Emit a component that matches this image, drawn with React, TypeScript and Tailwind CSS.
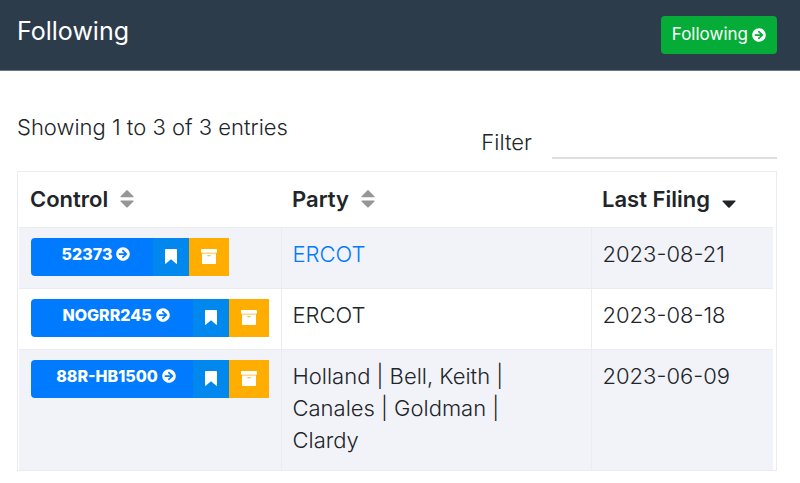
import React from 'react';
import { FaArrowCircleRight } from 'react-icons/fa';

interface Filing {
    control: string;
    party: string;
    linked?: boolean;
    date: string;
    width: string;
}

const FILINGS: Filing[] = [
    { control: '52373', party: 'ERCOT', linked: true, date: '2023-08-21', width: 'w-[122px]' },
    { control: 'NOGRR245', party: 'ERCOT', date: '2023-08-18', width: 'w-[162px]' },
    { control: '88R-HB1500', party: 'Holland | Bell, Keith | Canales | Goldman | Clardy', date: '2023-06-09', width: 'w-[162px]' },
];

const SortIcon: React.FC = () => (
    <svg viewBox="0 0 14 18" className="w-3.5 h-[18px] fill-[#969696]" aria-hidden="true">
        <path d="M6.3.4.6 6.2c-.5.5-.2 1 .4 1h12c.6 0 .9-.5.4-1L7.7.4a1 1 0 0 0-1.4 0ZM1 10.6h12c.6 0 .9.5.4 1l-5.7 5.6a1 1 0 0 1-1.4 0L.6 11.6c-.5-.5-.2-1 .4-1Z" />
    </svg>
);

const SortDownIcon: React.FC = () => (
    <svg viewBox="0 0 14 18" className="w-3.5 h-[18px] fill-[#212529]" aria-hidden="true">
        <path d="M1 10.6h12c.6 0 .9.5.4 1l-5.7 5.8a1 1 0 0 1-1.4 0L.6 11.6c-.5-.5-.2-1 .4-1Z" />
    </svg>
);

const BookmarkIcon: React.FC = () => (
    <svg viewBox="0 0 12 15" className="w-3 h-[15px] fill-white" aria-hidden="true">
        <path d="M.7 0h10.600c.4 0 .7.3.7.7V14.500c0 .4-.4.5-.7.3L6 10.300.7 14.800c-.3.2-.7.1-.7-.3V.7C0 .3.3 0 .7 0Z" />
    </svg>
);

const ArchiveIcon: React.FC = () => (
    <svg viewBox="0 0 16 15" className="w-4 h-[15px] fill-white" aria-hidden="true">
        <path d="M.7 0h14.600c.4 0 .7.3.7.7v2.600c0 .3-.2.5-.5.5H.5c-.3 0-.5-.2-.5-.5V.7C0 .3.3 0 .7 0Z" />
        <path fillRule="evenodd" d="M1 4.500h14v9.500c0 .6-.4 1-1 1H2c-.6 0-1-.4-1-1V4.500Zm5.300 1.700v.5c0 .3.2.5.5.5h2.400c.3 0 .5-.2.5-.5v-.5H6.300Z" />
    </svg>
);

const App: React.FC = () => {
    return (
        <div className="min-h-screen bg-white font-['Inter','Liberation_Sans',sans-serif] text-[22px] font-light text-[#212529]">
            <header className="flex items-start justify-between bg-[#2c3c4b] border-b border-[#6b7783] py-4 pl-[17px] pr-[23px]">
                <h1 className="text-[25px] leading-[30px] font-normal text-white">Following</h1>
                <button type="button" className="flex items-center gap-1 h-[38px] px-[11px] rounded bg-[#05ac38] text-white text-[17px] font-normal">
                    Following <FaArrowCircleRight className="size-3.5" />
                </button>
            </header>

            <main className="pl-[17px] pr-[23px] pt-10 pb-3">
                <div className="flex justify-between">
                    <p className="leading-8">Showing 1 to 3 of 3 entries</p>
                    <div className="flex items-end gap-5 pb-3">
                        <label htmlFor="filter" className="pb-px leading-8">Filter</label>
                        <input id="filter" type="text" className="w-[225px] h-12 border-b-2 border-[#dedfe1] bg-transparent outline-none" />
                    </div>
                </div>

                <div className="border border-[#ebecef] pl-px pr-[3px]">
                    <table className="w-full table-fixed border-collapse text-left">
                        <thead>
                            <tr className="h-[55px] border-b border-[#ebecef]">
                                <th className="w-[262px] px-[11px] font-semibold">
                                    <span className="flex items-center gap-3">Control <SortIcon /></span>
                                </th>
                                <th className="px-[11px] font-semibold">
                                    <span className="flex items-center gap-3">Party <SortIcon /></span>
                                </th>
                                <th className="w-[182px] px-[11px] font-semibold">
                                    <span className="flex items-center gap-3">Last Filing <SortDownIcon /></span>
                                </th>
                            </tr>
                        </thead>
                        <tbody>
                            {FILINGS.map(row => (
                                <tr key={row.control} className="align-top odd:bg-[#f2f3f8] border-b border-[#ebecef] last:border-b-0">
                                    <td className="pl-3 pt-[10px] pb-3 border-r border-[#ebecef]">
                                        <div className="inline-flex h-[38px] overflow-hidden rounded-l align-top text-white">
                                            <button type="button" className={`${row.width} flex items-center justify-center gap-1 pb-1.5 pl-2 bg-[#007bff] text-base font-extrabold`}>
                                                {row.control} <FaArrowCircleRight className="size-3.5" />
                                            </button>
                                            <button type="button" aria-label="Bookmark" className="flex items-center justify-center w-9 bg-[#0088ee]">
                                                <BookmarkIcon />
                                            </button>
                                            <button type="button" aria-label="Archive" className="flex items-center justify-center w-10 bg-[#ffae00]">
                                                <ArchiveIcon />
                                            </button>
                                        </div>
                                    </td>
                                    <td className="px-[11px] pt-[10px] pb-3.5 leading-8 border-r border-[#ebecef]">
                                        <div className="max-w-[240px]">
                                            {row.linked ? <a href="#ercot" className="text-[#007bff]">{row.party}</a> : row.party}
                                        </div>
                                    </td>
                                    <td className="px-[11px] pt-[10px] leading-8">{row.date}</td>
                                </tr>
                            ))}
                        </tbody>
                    </table>
                </div>
            </main>
        </div>
    );
};

export default App;
